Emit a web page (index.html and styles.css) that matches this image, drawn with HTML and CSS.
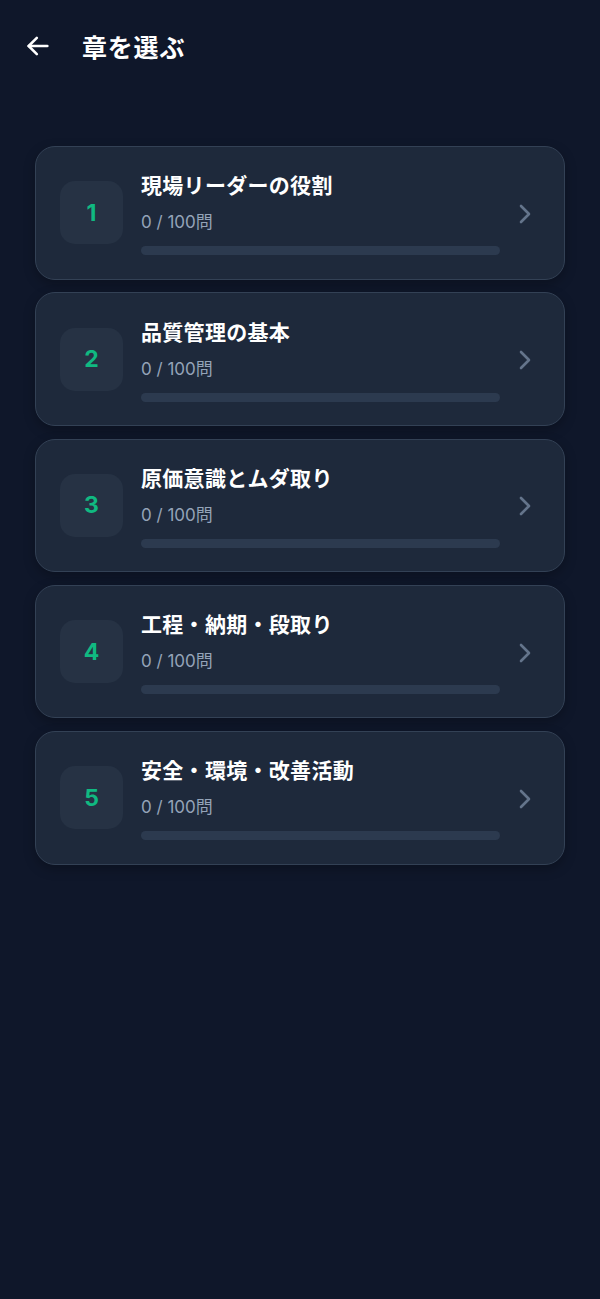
FILE: index.html
```html
<!DOCTYPE html>
<html lang="ja">
<head>
<meta charset="utf-8">
<link rel="stylesheet" href="styles.css">
</head>
<body>
<header class="topbar">
  <svg class="back" width="28" height="28" viewBox="0 0 24 24" fill="none" stroke="#ffffff" stroke-width="2.2" stroke-linecap="round" stroke-linejoin="round"><path d="M20 12H4"/><path d="M11 5l-7 7 7 7"/></svg>
  <h1 class="title">章を選ぶ</h1>
</header>
<main class="list">
  <div class="card">
    <div class="num">1</div>
    <div class="info">
      <div class="name">現場リーダーの役割</div>
      <div class="count">0 / 100問</div>
      <div class="bar"><div class="fill" style="width:0%"></div></div>
    </div>
    <svg class="chev" width="18" height="22" viewBox="0 0 18 22" fill="none" stroke="#64748b" stroke-width="2.6" stroke-linecap="round" stroke-linejoin="round"><path d="M5 3l8 8-8 8"/></svg>
  </div>
  <div class="card">
    <div class="num">2</div>
    <div class="info">
      <div class="name">品質管理の基本</div>
      <div class="count">0 / 100問</div>
      <div class="bar"><div class="fill" style="width:0%"></div></div>
    </div>
    <svg class="chev" width="18" height="22" viewBox="0 0 18 22" fill="none" stroke="#64748b" stroke-width="2.6" stroke-linecap="round" stroke-linejoin="round"><path d="M5 3l8 8-8 8"/></svg>
  </div>
  <div class="card">
    <div class="num">3</div>
    <div class="info">
      <div class="name">原価意識とムダ取り</div>
      <div class="count">0 / 100問</div>
      <div class="bar"><div class="fill" style="width:0%"></div></div>
    </div>
    <svg class="chev" width="18" height="22" viewBox="0 0 18 22" fill="none" stroke="#64748b" stroke-width="2.6" stroke-linecap="round" stroke-linejoin="round"><path d="M5 3l8 8-8 8"/></svg>
  </div>
  <div class="card">
    <div class="num">4</div>
    <div class="info">
      <div class="name">工程・納期・段取り</div>
      <div class="count">0 / 100問</div>
      <div class="bar"><div class="fill" style="width:0%"></div></div>
    </div>
    <svg class="chev" width="18" height="22" viewBox="0 0 18 22" fill="none" stroke="#64748b" stroke-width="2.6" stroke-linecap="round" stroke-linejoin="round"><path d="M5 3l8 8-8 8"/></svg>
  </div>
  <div class="card">
    <div class="num">5</div>
    <div class="info">
      <div class="name">安全・環境・改善活動</div>
      <div class="count">0 / 100問</div>
      <div class="bar"><div class="fill" style="width:0%"></div></div>
    </div>
    <svg class="chev" width="18" height="22" viewBox="0 0 18 22" fill="none" stroke="#64748b" stroke-width="2.6" stroke-linecap="round" stroke-linejoin="round"><path d="M5 3l8 8-8 8"/></svg>
  </div>
</main>
</body>
</html>
```
FILE: styles.css
```css
html, body {
  margin: 0;
  padding: 0;
  background: #0f172a;
  height: 100%;
}
body {
  font-family: Inter, "Noto Sans CJK JP", "Noto Sans", sans-serif;
  color: #ffffff;
}
.topbar {
  display: flex;
  align-items: center;
  height: 92px;
  padding: 0 0 0 24px;
  box-sizing: border-box;
}
.back {
  display: block;
  margin-top: -1px;
}
.title {
  margin: 0 0 0 30px;
  font-size: 25px;
  font-weight: 700;
  letter-spacing: 0.8px;
}
.list {
  display: flex;
  flex-direction: column;
  gap: 12.8px;
  padding: 54px 35px 0 35px;
}
.card {
  display: flex;
  align-items: center;
  height: 133.5px;
  box-sizing: border-box;
  background: #1e293b;
  border: 1px solid #334155;
  border-radius: 20px;
  padding: 0 30px 0 24px;
  box-shadow: 0 4px 12px rgba(0, 0, 0, 0.25);
}
.num {
  flex: none;
  width: 63px;
  height: 63px;
  border-radius: 15px;
  background: #263244;
  color: #10b981;
  font-size: 23px;
  font-weight: 700;
  display: flex;
  align-items: center;
  justify-content: center;
}
.info {
  flex: 1;
  margin-left: 18px;
  margin-right: 16px;
  display: flex;
  flex-direction: column;
  padding-top: 2px;
}
.name {
  font-size: 21px;
  font-weight: 700;
  line-height: 28px;
  letter-spacing: 0.3px;
}
.count {
  margin-top: 11px;
  font-size: 17px;
  line-height: 22px;
  color: #94a3b8;
}
.bar {
  margin-top: 13px;
  height: 9px;
  border-radius: 5px;
  background: #2c3a4f;
  overflow: hidden;
}
.fill {
  height: 100%;
  background: #10b981;
}
.chev {
  flex: none;
  display: block;
  margin-top: 2px;
}
```
